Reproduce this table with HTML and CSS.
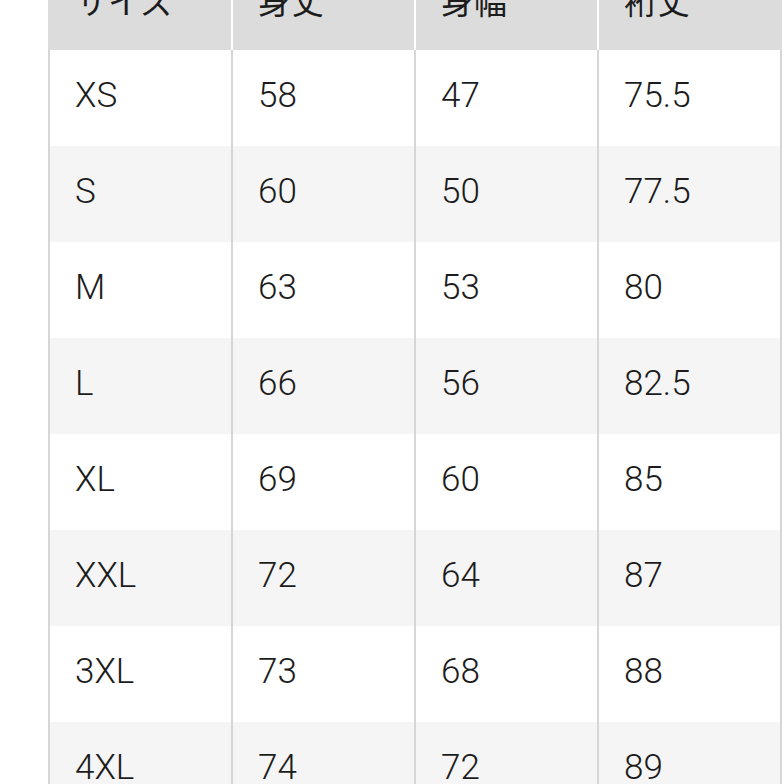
FILE: index.html
```html
<!DOCTYPE html>
<html lang="ja">
<head>
<meta charset="utf-8">
<title>サイズ表</title>
<link rel="stylesheet" href="styles.css">
</head>
<body>
<table class="size-table">
  <thead>
    <tr><th>サイズ</th><th>身丈</th><th>身幅</th><th>裄丈</th></tr>
  </thead>
  <tbody>
    <tr><td>XS</td><td>58</td><td>47</td><td>75.5</td></tr>
    <tr><td>S</td><td>60</td><td>50</td><td>77.5</td></tr>
    <tr><td>M</td><td>63</td><td>53</td><td>80</td></tr>
    <tr><td>L</td><td>66</td><td>56</td><td>82.5</td></tr>
    <tr><td>XL</td><td>69</td><td>60</td><td>85</td></tr>
    <tr><td>XXL</td><td>72</td><td>64</td><td>87</td></tr>
    <tr><td>3XL</td><td>73</td><td>68</td><td>88</td></tr>
    <tr><td>4XL</td><td>74</td><td>72</td><td>89</td></tr>
  </tbody>
</table>
</body>
</html>
```
FILE: styles.css
```css
html, body {
  margin: 0;
  padding: 0;
  background: #ffffff;
  overflow: hidden;
}
.size-table {
  margin: -46px 0 0 48px;
  border-collapse: separate;
  border-spacing: 0;
  table-layout: fixed;
  width: 734px;
  font-family: Roboto, "Noto Sans CJK JP", sans-serif;
  font-size: 35px;
  color: #1c1c1c;
}
.size-table th,
.size-table td {
  width: 183px;
  padding: 0 0 0 25px;
  box-sizing: border-box;
  text-align: left;
  vertical-align: middle;
  white-space: nowrap;
}
.size-table th:last-child,
.size-table td:last-child {
  width: 185px;
}
.size-table th {
  height: 96px;
  background: #dcdcdc;
  font-family: "Noto Sans CJK JP", Roboto, sans-serif;
  font-size: 33px;
  font-weight: 400;
  border-left: 2px solid #ffffff;
  padding-bottom: 4px;
}
.size-table th:first-child {
  border-left-color: #dcdcdc;
}
.size-table th:last-child {
  border-right: 2px solid #dcdcdc;
}
.size-table td {
  height: 96px;
  font-weight: 300;
  border-left: 2px solid #d6d6d6;
  padding-bottom: 6px;
}
.size-table td:last-child {
  border-right: 2px solid #d6d6d6;
}
.size-table tbody tr:nth-child(odd) {
  background: #ffffff;
}
.size-table tbody tr:nth-child(even) {
  background: #f5f5f5;
}
```
